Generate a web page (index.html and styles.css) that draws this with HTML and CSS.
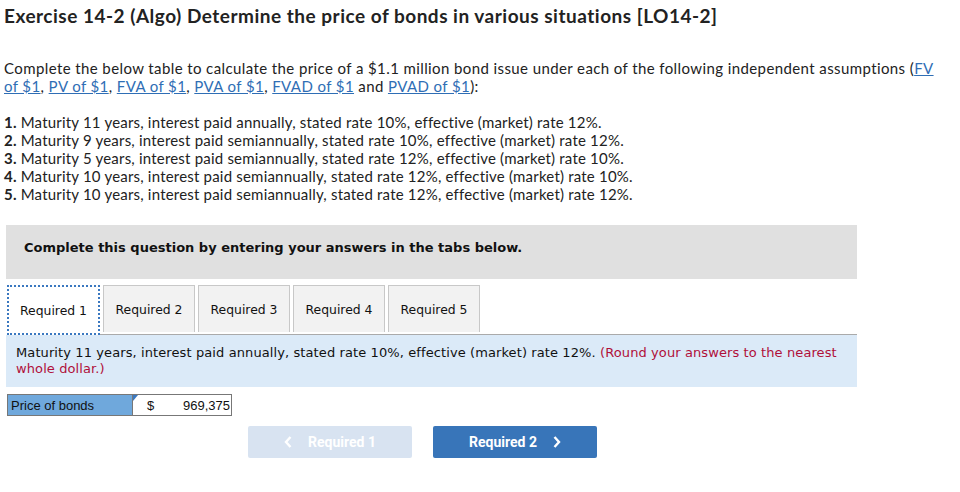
FILE: index.html
```html
<!DOCTYPE html>
<html>
<head>
<meta charset="utf-8">
<link rel="stylesheet" href="styles.css">
</head>
<body>
<h1 class="title">Exercise 14-2 (Algo) Determine the price of bonds in various situations [LO14-2]</h1>
<p class="intro">Complete the below table to calculate the price of a $1.1 million bond issue under each of the following independent assumptions (<a href="#">FV<br>of $1</a>, <a href="#">PV of $1</a>, <a href="#">FVA of $1</a>, <a href="#">PVA of $1</a>, <a href="#">FVAD of $1</a> and <a href="#">PVAD of $1</a>):</p>
<ol class="list">
<li><b>1.</b> Maturity 11 years, interest paid annually, stated rate 10%, effective (market) rate 12%.</li>
<li><b>2.</b> Maturity 9 years, interest paid semiannually, stated rate 10%, effective (market) rate 12%.</li>
<li><b>3.</b> Maturity 5 years, interest paid semiannually, stated rate 12%, effective (market) rate 10%.</li>
<li><b>4.</b> Maturity 10 years, interest paid semiannually, stated rate 12%, effective (market) rate 10%.</li>
<li><b>5.</b> Maturity 10 years, interest paid semiannually, stated rate 12%, effective (market) rate 12%.</li>
</ol>
<div class="banner">Complete this question by entering your answers in the tabs below.</div>
<div class="tabs">
<div class="tab active">Required 1</div>
<div class="tab">Required 2</div>
<div class="tab">Required 3</div>
<div class="tab">Required 4</div>
<div class="tab">Required 5</div>
</div>
<div class="panel">Maturity 11 years, interest paid annually, stated rate 10%, effective (market) rate 12%. <span class="hint">(Round your answers to the nearest whole dollar.)</span></div>
<div class="answer">
<div class="label">Price of bonds</div>
<div class="input"><span class="flag"></span><span>$</span><span>969,375</span></div>
</div>
<div class="nav">
<div class="btn prev"><svg class="chev" width="8" height="12" viewBox="0 0 8 12"><polyline points="6.5,1 2,6 6.5,11" fill="none" stroke="#fff" stroke-width="2.4"/></svg>Required 1</div>
<div class="btn next">Required 2<svg class="chev" width="8" height="12" viewBox="0 0 8 12"><polyline points="1.5,1 6,6 1.5,11" fill="none" stroke="#fff" stroke-width="2.4"/></svg></div>
</div>
</body>
</html>
```
FILE: styles.css
```css
body {
  margin: 0;
  background: #fff;
  font-family: Lato, "Open Sans", sans-serif;
  color: #222;
}
.title {
  margin: 0;
  padding: 5px 0 0 4px;
  font-size: 19px;
  line-height: 22px;
  letter-spacing: 0.5px;
  font-weight: 700;
  color: #222;
}
.intro {
  margin: 32px 0 0 4px;
  font-size: 15px;
  line-height: 18px;
  letter-spacing: 0.4px;
  color: #222;
}
.intro a {
  color: #2f6eb5;
  text-decoration: underline;
}
.list {
  list-style: none;
  margin: 18px 0 0 4px;
  padding: 0;
  font-size: 15px;
  line-height: 18px;
  letter-spacing: 0.2px;
}
.banner {
  margin: 22px 0 0 6px;
  height: 54px;
  padding: 15px 0 0 18px;
  box-sizing: border-box;
  width: 851px;
  background: #e0e0e0;
  font-family: Verdana, "DejaVu Sans", sans-serif;
  font-weight: 700;
  font-size: 13px;
  line-height: 16px;
  color: #111;
}
.tabs {
  margin: 6px 0 0 7px;
  width: 850px;
  display: flex;
  gap: 3px;
  border-bottom: 1px solid #aaa;
}
.tab {
  height: 46px;
  width: 90px;
  border: 1px solid #c8c8c8;
  border-bottom: none;
  background: #f2f2f2;
  font-family: Verdana, "DejaVu Sans", sans-serif;
  font-size: 12.4px;
  display: flex;
  align-items: center;
  justify-content: center;
  color: #111;
}
.tab.active {
  background: #fff;
  border: 2px dotted #3a78c0;
  width: 89px;
  margin-bottom: -1px;
}
.panel {
  margin: 0 0 0 6px;
  width: 831px;
  padding: 10px;
  background: #dbeaf8;
  font-family: Verdana, "DejaVu Sans", sans-serif;
  font-size: 13px;
  line-height: 16px;
  letter-spacing: 0.1px;
  color: #111;
}
.hint { color: #b0103a; }
.answer {
  margin: 7px 0 0 7px;
  display: flex;
  font-family: Arial, "Liberation Sans", sans-serif;
  font-size: 13px;
}
.label {
  width: 121px;
  height: 20px;
  border: 1px solid #777;
  border-right: none;
  background: #6fa8dc;
  padding-left: 3px;
  display: flex;
  align-items: center;
  color: #111;
}
.input {
  position: relative;
  height: 20px;
  width: 83px;
  border: 1px solid #777;
  background: #fff;
  display: flex;
  align-items: center;
  justify-content: space-between;
  padding: 0 1px 0 14px;
  color: #111;
}
.flag {
  position: absolute;
  left: 0;
  top: 0;
  width: 0;
  height: 0;
  border-top: 6px solid #3a78c0;
  border-right: 5px solid transparent;
}
.nav {
  margin: 10px 0 0 248px;
  display: flex;
  gap: 21px;
}
.btn {
  width: 164px;
  height: 32px;
  border-radius: 2px;
  display: flex;
  align-items: center;
  justify-content: center;
  font-family: Roboto, "Liberation Sans", sans-serif;
  font-weight: 700;
  font-size: 14px;
  color: #fff;
}
.prev { background: #d8e3f1; }
.next { background: #3875b9; }
.prev .chev { margin-right: 16px; }
.next .chev { margin-left: 16px; }
```
